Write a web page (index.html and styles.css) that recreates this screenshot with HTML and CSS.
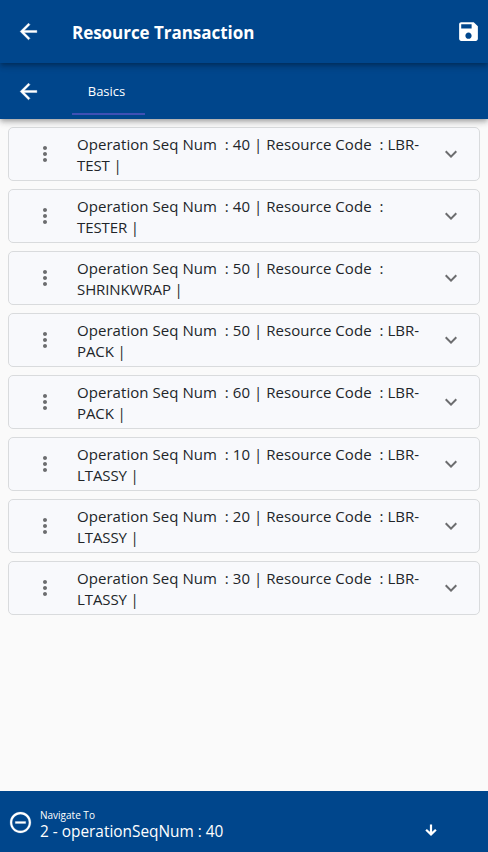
FILE: index.html
```html
<!DOCTYPE html>
<html lang="en">
<head>
<meta charset="utf-8">
<title>Resource Transaction</title>
<link rel="stylesheet" href="styles.css">
</head>
<body>
<svg class="sprite" width="0" height="0">
  <symbol id="back" viewBox="0 0 24 24"><path d="M20 11H7.83l5.59-5.59L12 4l-8 8 8 8 1.41-1.41L7.83 13H20z"/></symbol>
  <symbol id="save" viewBox="0 0 24 24"><path d="M17 3H5c-1.11 0-2 .9-2 2v14c0 1.1.89 2 2 2h14c1.1 0 2-.9 2-2V7l-4-4zm-5 16c-1.66 0-3-1.34-3-3s1.34-3 3-3 3 1.34 3 3-1.34 3-3 3zm3-10H5V5h10v4z"/></symbol>
  <symbol id="more" viewBox="0 0 24 24"><path d="M12 8c1.1 0 2-.9 2-2s-.9-2-2-2-2 .9-2 2 .9 2 2 2zm0 2c-1.1 0-2 .9-2 2s.9 2 2 2 2-.9 2-2-.9-2-2-2zm0 6c-1.1 0-2 .9-2 2s.9 2 2 2 2-.9 2-2-.9-2-2-2z"/></symbol>
  <symbol id="expand" viewBox="0 0 24 24"><path d="M16.59 8.59 12 13.17 7.41 8.59 6 10l6 6 6-6z"/></symbol>
  <symbol id="minus" viewBox="0 0 24 24"><path d="M7 11v2h10v-2H7zm5-9C6.48 2 2 6.48 2 12s4.48 10 10 10 10-4.48 10-10S17.52 2 12 2zm0 18c-4.41 0-8-3.59-8-8s3.59-8 8-8 8 3.59 8 8-3.59 8-8 8z"/></symbol>
  <symbol id="down" viewBox="0 0 12 12"><path d="M6 .5v10M1.1 5.8 6 10.4 10.9 5.8" fill="none" stroke="currentColor" stroke-width="2.2"/></symbol>
</svg>
<header class="appbar">
  <svg class="icon back"><use href="#back"/></svg>
  <h1 class="title">Resource Transaction</h1>
  <svg class="icon save"><use href="#save"/></svg>
</header>
<nav class="tabs">
  <svg class="icon back"><use href="#back"/></svg>
  <span class="tab">Basics</span>
</nav>
<main class="list">
  <article class="card"><svg class="more"><use href="#more"/></svg><p class="text"><span class="line">Operation Seq Num&nbsp; : 40 | Resource Code&nbsp; : LBR-</span><br>TEST |</p><svg class="expand"><use href="#expand"/></svg></article>
  <article class="card"><svg class="more"><use href="#more"/></svg><p class="text"><span class="line">Operation Seq Num&nbsp; : 40 | Resource Code&nbsp; :</span><br>TESTER |</p><svg class="expand"><use href="#expand"/></svg></article>
  <article class="card"><svg class="more"><use href="#more"/></svg><p class="text"><span class="line">Operation Seq Num&nbsp; : 50 | Resource Code&nbsp; :</span><br>SHRINKWRAP |</p><svg class="expand"><use href="#expand"/></svg></article>
  <article class="card"><svg class="more"><use href="#more"/></svg><p class="text"><span class="line">Operation Seq Num&nbsp; : 50 | Resource Code&nbsp; : LBR-</span><br>PACK |</p><svg class="expand"><use href="#expand"/></svg></article>
  <article class="card"><svg class="more"><use href="#more"/></svg><p class="text"><span class="line">Operation Seq Num&nbsp; : 60 | Resource Code&nbsp; : LBR-</span><br>PACK |</p><svg class="expand"><use href="#expand"/></svg></article>
  <article class="card"><svg class="more"><use href="#more"/></svg><p class="text"><span class="line">Operation Seq Num&nbsp; : 10 | Resource Code&nbsp; : LBR-</span><br>LTASSY |</p><svg class="expand"><use href="#expand"/></svg></article>
  <article class="card"><svg class="more"><use href="#more"/></svg><p class="text"><span class="line">Operation Seq Num&nbsp; : 20 | Resource Code&nbsp; : LBR-</span><br>LTASSY |</p><svg class="expand"><use href="#expand"/></svg></article>
  <article class="card"><svg class="more"><use href="#more"/></svg><p class="text"><span class="line">Operation Seq Num&nbsp; : 30 | Resource Code&nbsp; : LBR-</span><br>LTASSY |</p><svg class="expand"><use href="#expand"/></svg></article>
</main>
<footer class="footer">
  <svg class="minus"><use href="#minus"/></svg>
  <div class="nav-text"><span class="label">Navigate To</span><span class="value">2 - operationSeqNum : 40</span></div>
  <svg class="down"><use href="#down"/></svg>
</footer>
</body>
</html>
```
FILE: styles.css
```css
* { box-sizing: border-box; }
body {
  margin: 0;
  height: 852px;
  display: flex;
  flex-direction: column;
  overflow: hidden;
  background: #fafafa;
  font-family: "Segoe UI", "Open Sans", sans-serif;
  color: #212529;
}
svg { display: block; fill: currentColor; flex: none; }
.sprite { display: none; }
.appbar, .tabs, .footer { background: #00468c; color: #fff; display: flex; flex: none; }
.appbar {
  height: 63px;
  padding: 0 7px 1px 16px;
  align-items: center;
  position: relative;
  z-index: 2;
  box-shadow: 0 2px 4px -1px rgba(0,0,0,.2), 0 4px 5px rgba(0,0,0,.14), 0 1px 10px rgba(0,0,0,.12);
}
.icon { width: 25px; height: 25px; }
.back { stroke: currentColor; stroke-width: .4; }
.title { margin: 3px 0 0 31px; font-size: 17px; line-height: 24px; font-weight: 700; letter-spacing: -.04px; white-space: nowrap; }
.save { margin-left: auto; }
.tabs {
  height: 56px;
  padding-left: 16px;
  align-items: center;
  position: relative;
  z-index: 1;
  box-shadow: 0 2px 4px -1px rgba(0,0,0,.2), 0 4px 5px rgba(0,0,0,.14), 0 1px 10px rgba(0,0,0,.12);
}
.tab {
  width: 73px;
  height: 48px;
  margin: 0 0 0 31px;
  padding-right: 4px;
  border-bottom: 2px solid #3f51b5;
  font-size: 13px;
  line-height: 48px;
  text-align: center;
}
.list { flex: 1; padding: 8px; display: flex; flex-direction: column; gap: 8px; }
.card {
  height: 54px;
  display: flex;
  align-items: center;
  padding: 0 16px 0 24px;
  border: 1px solid #d9dbdd;
  border-radius: 5px;
  background: #f8f9fc;
}
.more, .expand { width: 24px; height: 24px; color: #6c6d6f; }
.text { margin: 2px 0 0 20px; flex: 1; font-size: 15px; line-height: 21px; letter-spacing: -.1px; white-space: nowrap; }
.line { letter-spacing: .05px; }
.footer { height: 61px; align-items: center; padding: 0 51px 0 8px; }
.minus { width: 25px; height: 25px; margin-top: 2px; stroke: currentColor; stroke-width: .2; }
.nav-text { margin: 4px 0 0 7px; display: flex; flex-direction: column; }
.label { font-size: 10px; line-height: 15px; padding-top: 1px; }
.value { font-size: 15.4px; line-height: 17px; white-space: nowrap; }
.down { width: 12px; height: 12px; margin: 17px 0 0 auto; }
```
